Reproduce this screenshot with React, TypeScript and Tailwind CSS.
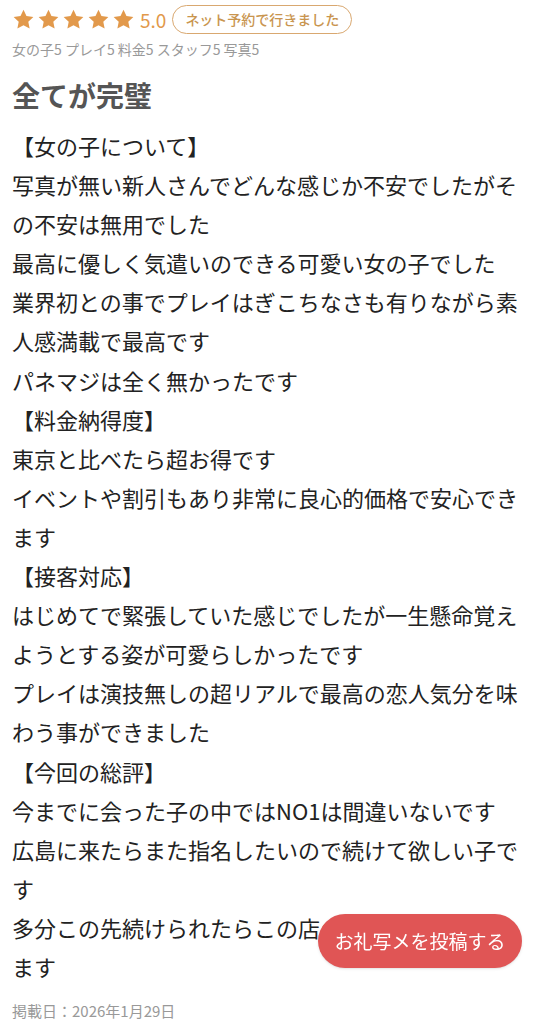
import React from 'react';

const paragraphs = [
  '【女の子について】',
  '写真が無い新人さんでどんな感じか不安でしたがその不安は無用でした',
  '最高に優しく気遣いのできる可愛い女の子でした',
  '業界初との事でプレイはぎこちなさも有りながら素人感満載で最高です',
  'パネマジは全く無かったです',
  '【料金納得度】',
  '東京と比べたら超お得です',
  'イベントや割引もあり非常に良心的価格で安心できます',
  '【接客対応】',
  'はじめてで緊張していた感じでしたが一生懸命覚えようとする姿が可愛らしかったです',
  'プレイは演技無しの超リアルで最高の恋人気分を味わう事ができました',
  '【今回の総評】',
  '今までに会った子の中ではNO1は間違いないです',
  '広島に来たらまた指名したいので続けて欲しい子です',
  '多分この先続けられたらこの店のNO1になると思います',
];

const Star = () => (
  <svg viewBox="0 0 24 24" className="w-[23px] h-[23px]" fill="#e2994b">
    <path d="M12 1.8l3.1 6.6 7.2.9-5.3 5 1.4 7.1L12 17.9l-6.4 3.5 1.4-7.1-5.3-5 7.2-.9z" />
  </svg>
);

export default function App() {
  const font = { fontFamily: '"Noto Sans CJK JP", "Noto Sans", sans-serif' };
  return (
    <div className="bg-white min-h-screen px-3 pt-1 text-[#222]" style={font}>
      {/* rating row */}
      <div className="flex items-center h-[30px]">
        <div className="flex items-center gap-[2px]">
          <Star />
          <Star />
          <Star />
          <Star />
          <Star />
        </div>
        <span className="ml-[5px] text-[19px] text-[#e2994b] leading-none">5.0</span>
        <span className="ml-[6px] h-[29px] px-[12px] flex items-center rounded-full border-[1.5px] border-[#d9a870] text-[14px] text-[#c9954f] font-medium">
          ネット予約で行きました
        </span>
      </div>
      <div className="mt-[5px] text-[14px] text-[#999] leading-[20px]">
        女の子5 プレイ5 料金5 スタッフ5 写真5
      </div>

      <h1 className="mt-[17px] text-[28px] font-bold text-[#555] leading-[38px]">全てが完璧</h1>

      <div className="mt-[12px] text-[22px] leading-[39.1px] break-all">
        {paragraphs.map((p, i) => (
          <div key={i}>{p}</div>
        ))}
      </div>

      <div className="mt-[15px] pb-4 text-[15px] text-[#999] leading-[20px]">掲載日：2026年1月29日</div>

      <button className="fixed left-[318px] top-[914px] w-[204px] h-[54px] rounded-full bg-[#e05555] text-white text-[19px] shadow-sm">
        お礼写メを投稿する
      </button>
    </div>
  );
}
